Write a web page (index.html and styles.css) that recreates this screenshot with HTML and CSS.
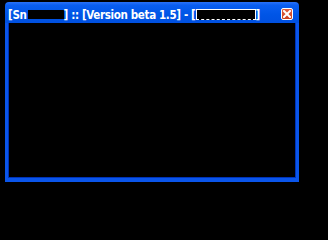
FILE: index.html
```html
<!DOCTYPE html>
<html>
<head>
<meta charset="utf-8">
<link rel="stylesheet" href="styles.css">
</head>
<body>
<div class="window">
  <div class="titlebar">
    <div class="title">[Sn<span class="redact"></span>] :: [Version beta 1.5] - [<span class="redact2"></span>]</div>
    <div class="close">
      <svg width="8" height="8" viewBox="0 0 8 8"><path d="M1 1L7 7M7 1L1 7" stroke="#fff" stroke-width="2" stroke-linecap="square"/></svg>
    </div>
  </div>
  <div class="content"></div>
</div>
</body>
</html>
```
FILE: styles.css
```css
html, body {
  margin: 0;
  padding: 0;
  background: #000;
  width: 328px;
  height: 201px;
  overflow: hidden;
}
.window {
  margin: 2px 0 0 5px;
  width: 294px;
  height: 180px;
  display: flex;
  flex-direction: column;
}
.titlebar {
  height: 21px;
  flex: none;
  background: linear-gradient(#2a72f8 0%, #0a5ef0 15%, #0055e6 60%, #0050e0 100%);
  border-radius: 4px 4px 0 0;
  display: flex;
  align-items: center;
  padding: 0 6px 0 3px;
  box-sizing: border-box;
}
.title {
  flex: 1;
  min-width: 0;
  overflow: hidden;
  color: #fff;
  font-family: "DejaVu Sans Condensed", "DejaVu Sans", sans-serif;
  font-stretch: condensed;
  font-weight: bold;
  font-size: 11.5px;
  letter-spacing: -0.35px;
  white-space: nowrap;
  display: flex;
  align-items: center;
  padding-top: 4px;
}
.redact {
  display: inline-block;
  width: 36px;
  height: 9px;
  margin-left: 1px;
  background: #000;
}
.redact2 {
  display: inline-block;
  width: 58px;
  height: 9px;
  background: #000;
  border: 1px solid #fff;
  border-bottom-style: dashed;
}
.close {
  flex: none;
  width: 12px;
  height: 12px;
  box-sizing: border-box;
  border: 1px solid #fff;
  border-radius: 2px;
  background: linear-gradient(#e0603f, #c9401f);
  display: flex;
  align-items: center;
  justify-content: center;
  margin-top: 3px;
}
.close svg { display: block; }
.content {
  flex: 1;
  background: #000;
  border: 3px solid #0a55ea;
  border-top: none;
  border-bottom-width: 4px;
  box-shadow: inset 1px 0 0 #0033b8, inset -1px 0 0 #0033b8, inset 0 -1px 0 #0033b8;
}
```
